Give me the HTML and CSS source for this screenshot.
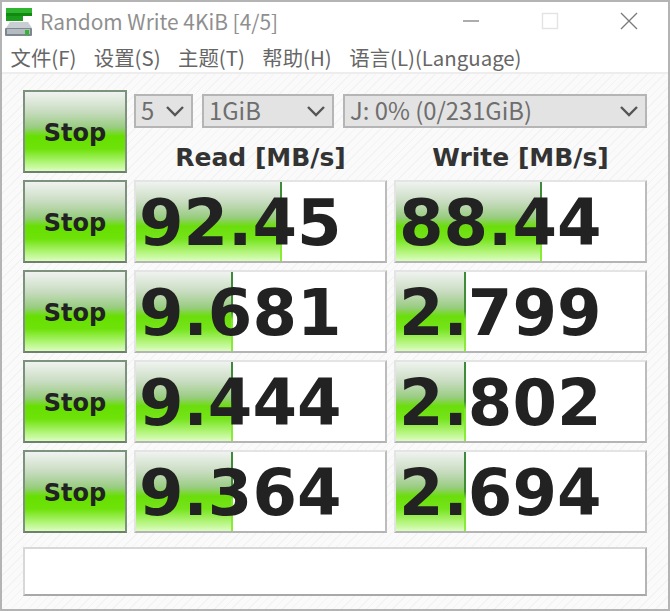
FILE: index.html
```html
<!DOCTYPE html>
<html lang="zh">
<head>
    <meta charset="UTF-8">
    <title>Random Write 4KiB [4/5]</title>
    <link rel="stylesheet" href="styles.css">
</head>
<body>
    <div class="window">
        <div class="titlebar">
            <svg class="app-icon" width="28" height="28" viewBox="0 0 28 28">
                <rect x="1" y="0" width="26" height="5" fill="#2fb52f"/>
                <rect x="1" y="5" width="26" height="3" fill="#128a12"/>
                <rect x="1" y="8" width="17" height="5" fill="#1c9c1c"/>
                <path d="M5 14h18l4 6H1z" fill="#c9ced2"/>
                <rect x="0" y="20" width="27" height="8" rx="1" fill="#7d8790"/>
                <rect x="2" y="21" width="23" height="5" fill="#b4bbc1"/>
                <rect x="20" y="22" width="4" height="5" fill="#34b534"/>
            </svg>
            <div class="title">Random Write 4KiB [4/5]</div>
            <div class="win-btns">
                <svg width="18" height="18" viewBox="0 0 18 18"><path d="M1 9h16" stroke="#8a8a8a" stroke-width="1.4"/></svg>
                <svg width="18" height="18" viewBox="0 0 18 18"><rect x="1.5" y="1.5" width="15" height="15" fill="none" stroke="#e3e3e3" stroke-width="1.4"/></svg>
                <svg width="18" height="18" viewBox="0 0 18 18"><path d="M1 1l16 16M17 1L1 17" stroke="#7a7a7a" stroke-width="1.3"/></svg>
            </div>
        </div>
        <div class="menubar">
            <span>文件(F)</span>
            <span>设置(S)</span>
            <span>主题(T)</span>
            <span>帮助(H)</span>
            <span>语言(L)(Language)</span>
        </div>
        <div class="content">
            <div class="grid">
                <div class="btn btn-top">Stop</div>
                <div class="top-col">
                    <div class="combos">
                        <div class="combo combo-count">5<svg class="chev" width="20" height="12" viewBox="0 0 20 12"><path d="M2 2l8 8 8-8" fill="none" stroke="#555" stroke-width="2.4"/></svg></div>
                        <div class="combo combo-size">1GiB<svg class="chev" width="20" height="12" viewBox="0 0 20 12"><path d="M2 2l8 8 8-8" fill="none" stroke="#555" stroke-width="2.4"/></svg></div>
                        <div class="combo combo-drive">J: 0% (0/231GiB)<svg class="chev" width="20" height="12" viewBox="0 0 20 12"><path d="M2 2l8 8 8-8" fill="none" stroke="#555" stroke-width="2.4"/></svg></div>
                    </div>
                    <div class="heads">
                        <div class="head">Read [MB/s]</div>
                        <div class="head">Write [MB/s]</div>
                    </div>
                </div>

                <div class="btn">Stop</div>
                <div class="pair">
                    <div class="meter"><div class="bar" style="width: 146px"></div><span class="value">92.45</span></div>
                    <div class="meter"><div class="bar" style="width: 146px"></div><span class="value">88.44</span></div>
                </div>

                <div class="btn">Stop</div>
                <div class="pair">
                    <div class="meter"><div class="bar" style="width: 97px"></div><span class="value">9.681</span></div>
                    <div class="meter"><div class="bar" style="width: 70px"></div><span class="value">2.799</span></div>
                </div>

                <div class="btn">Stop</div>
                <div class="pair">
                    <div class="meter"><div class="bar" style="width: 97px"></div><span class="value">9.444</span></div>
                    <div class="meter"><div class="bar" style="width: 70px"></div><span class="value">2.802</span></div>
                </div>

                <div class="btn">Stop</div>
                <div class="pair">
                    <div class="meter"><div class="bar" style="width: 97px"></div><span class="value">9.364</span></div>
                    <div class="meter"><div class="bar" style="width: 70px"></div><span class="value">2.694</span></div>
                </div>
            </div>
            <div class="status"></div>
        </div>
    </div>
</body>
</html>
```

FILE: styles.css
```css
html, body {
    margin: 0;
    padding: 0;
}
body {
    width: 670px;
    height: 611px;
    overflow: hidden;
    font-family: "Noto Sans CJK SC", "Noto Sans", sans-serif;
    color: #5a5a5a;
}
.window {
    box-sizing: border-box;
    width: 670px;
    height: 611px;
    border: 2px solid #b4b4b4;
    background-color: white;
    display: flex;
    flex-direction: column;
}
.titlebar {
    height: 38px;
    display: flex;
    align-items: center;
    padding-left: 3px;
    flex-shrink: 0;
}
.app-icon {
    margin-top: 2px;
}
.title {
    margin-left: 7px;
    font-size: 20.9px;
    color: #8f8f8f;
    white-space: nowrap;
}
.win-btns {
    margin-left: auto;
    margin-right: 30px;
    display: flex;
    gap: 61px;
}
.menubar {
    height: 34px;
    display: flex;
    align-items: center;
    gap: 17.5px;
    padding-left: 8.5px;
    padding-top: 2px;
    font-size: 20.4px;
    color: #666;
    flex-shrink: 0;
    border-bottom: 2px solid #ededed;
    box-sizing: border-box;
}
.content {
    flex: 1;
    padding: 16px 21px 0 21px;
    background-color: #fafafa;
    background-image: repeating-linear-gradient(135deg, #f3f3f3 0, #f3f3f3 1px, transparent 1px, transparent 6px);
}
.grid {
    display: grid;
    grid-template-columns: 104px 513px;
    column-gap: 7px;
    row-gap: 7px;
    grid-template-rows: 83px 83px 83px 83px 83px;
}
.btn {
    box-sizing: border-box;
    border: 2px solid #7d927d;
    border-bottom-color: #6e7f6e;
    background: linear-gradient(to bottom, #f0f3f0 0%, #c8dcc0 25%, #98cc80 45%, #66e000 56%, #6ee20a 72%, #b4f67e 90%, #dcfcc0 100%);
    display: flex;
    align-items: center;
    justify-content: center;
    padding-top: 2px;
    font-family: "DejaVu Sans", sans-serif;
    font-weight: bold;
    font-size: 24px;
    color: #222;
}
.top-col {
    display: flex;
    flex-direction: column;
    padding-top: 4px;
}
.combos {
    display: flex;
    gap: 9px;
}
.combo {
    box-sizing: border-box;
    height: 34px;
    display: flex;
    align-items: center;
    justify-content: space-between;
    padding: 0 6px 3px 5px;
    background-color: #e3e3e3;
    border: 2px solid #b5b5b5;
    font-size: 23.8px;
    color: #6e6e6e;
    white-space: nowrap;
}
.chev {
    margin-top: 3px;
}
.combo-count {
    width: 59px;
}
.combo-size {
    width: 132px;
}
.combo-drive {
    width: 304px;
}
.heads {
    display: flex;
    gap: 7px;
}
.head {
    width: 253px;
    height: 45px;
    padding-top: 13px;
    box-sizing: border-box;
    display: flex;
    align-items: center;
    justify-content: center;
    font-family: "DejaVu Sans", sans-serif;
    font-weight: bold;
    font-size: 25px;
    color: #333;
}
.pair {
    display: flex;
    gap: 7px;
}
.meter {
    position: relative;
    box-sizing: border-box;
    width: 253px;
    height: 83px;
    border: 2px solid #e4e4e4;
    border-right-color: #bcbcbc;
    border-bottom-color: #b4b4b4;
    background-color: white;
    overflow: hidden;
}
.bar {
    height: 100%;
    box-sizing: border-box;
    background: linear-gradient(to bottom, #f0f3f0 0%, #c8dcc0 25%, #98cc80 45%, #6ade0a 56%, #76e41c 72%, #b8f684 90%, #dcfcc0 100%);
    border-right: 2px solid;
    border-image: linear-gradient(to bottom, #3e8a3e 0%, #3f8f30 50%, #7de82a 60%, #8cec3a 100%) 1;
}
.value {
    position: absolute;
    left: 3px;
    top: 1px;
    height: 79px;
    display: flex;
    align-items: center;
    font-family: "DejaVu Sans", sans-serif;
    font-weight: bold;
    font-size: 64px;
    color: #222;
}
.status {
    box-sizing: border-box;
    margin-top: 14px;
    width: 624px;
    height: 49px;
    border: 2px solid #d8d8d8;
    border-right-color: #b4b4b4;
    border-bottom-color: #a8a8a8;
    background-color: white;
}
```
